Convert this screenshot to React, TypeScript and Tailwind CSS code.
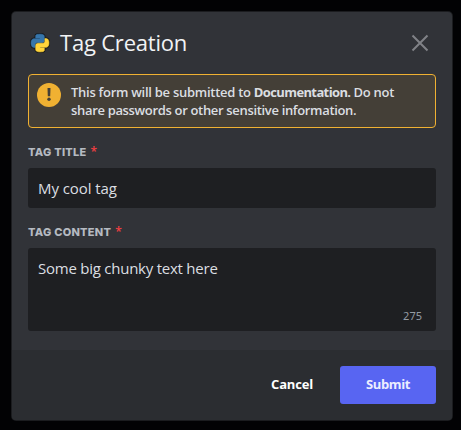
import type { ReactNode } from "react";

const snake =
  "M14.25.18l.9.2.73.26.59.3.45.32.34.34.25.34.16.33.1.3.04.26.02.2-.01.13V8.5l-.05.63-.13.55-.21.46-.26.38-.3.31-.33.25-.35.19-.35.14-.33.1-.3.07-.26.04-.21.02H8.77l-.69.05-.59.14-.5.22-.41.27-.33.32-.27.35-.2.36-.15.37-.1.35-.07.32-.04.27-.02.21v3.06H3.17l-.21-.03-.28-.07-.32-.12-.35-.18-.36-.26-.36-.36-.35-.46-.32-.59-.28-.73-.21-.88-.14-1.05-.05-1.23.06-1.22.16-1.04.24-.87.32-.71.36-.57.4-.44.42-.33.42-.24.4-.16.36-.1.32-.05.24-.01h.16l.06.01h8.16v-.83H6.18l-.01-2.75-.02-.37.05-.34.11-.31.17-.28.25-.26.31-.23.38-.2.44-.18.51-.15.58-.12.64-.1.71-.06.77-.04.84-.02 1.27.05z";

function PythonLogo() {
  return (
    <svg viewBox="-1.5 -1.5 27 27" className="size-5 shrink-0">
      <g stroke="#15181b" strokeWidth="3" strokeLinejoin="round" fill="#15181b">
        <path d={snake} />
        <path d={snake} transform="rotate(180 12 12)" />
      </g>
      <path d={snake} fill="#3776ab" stroke="#3776ab" strokeWidth="0.8" />
      <path d={snake} fill="#ffd43b" stroke="#ffd43b" strokeWidth="0.8" transform="rotate(180 12 12)" />
    </svg>
  );
}

function FieldLabel({ children }: { children: ReactNode }) {
  return (
    <div className="flex h-4 items-center gap-1 whitespace-nowrap font-['Inter','Open_Sans',sans-serif] text-[11px] leading-4 font-extrabold text-[#b5bac1]">
      <span className="tracking-[0.27px]">{children}</span>
      <span className="pb-px font-['Open_Sans',sans-serif] text-xs font-semibold text-[#f23f42]">*</span>
    </div>
  );
}

export default function App() {
  return (
    <div className="h-[430px] w-[461px] bg-[#020204] pt-3 pl-3 font-['Open_Sans','Noto_Sans',sans-serif]">
      <div className="flex h-[408px] w-[440px] flex-col overflow-hidden rounded-[4px] bg-[#313338] shadow-[0_0_0_1px_#1b1c1f]">
        <main className="flex h-[338px] flex-col px-4">
          <header className="flex h-[62px] shrink-0 items-center gap-3 pl-0.5 pr-1">
            <PythonLogo />
            <h1 className="-ml-0.5 flex-1 whitespace-nowrap pb-0.5 text-[22px] leading-7 tracking-[-0.2px] text-[#f2f3f5]">Tag Creation</h1>
            <svg viewBox="0 0 24 24" className="size-6 text-[#808287]">
              <path d="M4.5 4.5 19.5 19.5M19.5 4.5 4.5 19.5" stroke="currentColor" strokeWidth="2" />
            </svg>
          </header>
          <section className="flex h-[54px] shrink-0 gap-[10px] rounded-[4px] border border-[#f0b132] bg-[#443f37] px-2 pt-2">
            <svg viewBox="0 0 24 24" className="size-6 shrink-0">
              <circle cx="12" cy="12" r="12" fill="#f0b132" />
              <path d="M10.5 5h3l-.3 8.3h-2.4z" fill="#443f37" />
              <circle cx="12" cy="16.3" r="1.7" fill="#443f37" />
            </svg>
            <p className="whitespace-nowrap text-[13px] leading-[18px] font-semibold text-[#dbdee1]">
              <span className="block tracking-[-0.27px]">This form will be submitted to <span className="font-bold tracking-[-0.62px]">Documentation.</span> Do not</span>
              <span className="block tracking-[-0.33px]">share passwords or other sensitive information.</span>
            </p>
          </section>
          <div className="pt-4">
            <FieldLabel>TAG TITLE</FieldLabel>
            <div className="mt-2 flex h-10 items-center rounded-[3px] bg-[#1e1f22] px-[10px] text-[15px] tracking-[-0.07px] text-[#dbdee1]">
              <span className="whitespace-nowrap">My cool tag</span>
            </div>
          </div>
          <div className="pt-4">
            <FieldLabel>TAG CONTENT</FieldLabel>
            <div className="mt-2 flex h-[83px] flex-col justify-between rounded-[3px] bg-[#1e1f22] px-[10px] pt-[10px] pb-[7px] text-[15px] leading-5 text-[#dbdee1]">
              <span className="whitespace-nowrap tracking-[-0.24px]">Some big chunky text here</span>
              <span className="self-end pr-1 font-['Noto_Sans',sans-serif] text-[11px] leading-4 text-[#949ba4]">275</span>
            </div>
          </div>
        </main>
        <footer className="flex h-[70px] items-center justify-end bg-[#2b2d31] px-4 text-[13px] font-bold text-white">
          <button className="h-[38px] w-24 tracking-[-0.2px]">Cancel</button>
          <button className="h-[38px] w-24 rounded-[3px] bg-[#5865f2] tracking-[-0.4px] text-[#eceeff]">Submit</button>
        </footer>
      </div>
    </div>
  );
}
